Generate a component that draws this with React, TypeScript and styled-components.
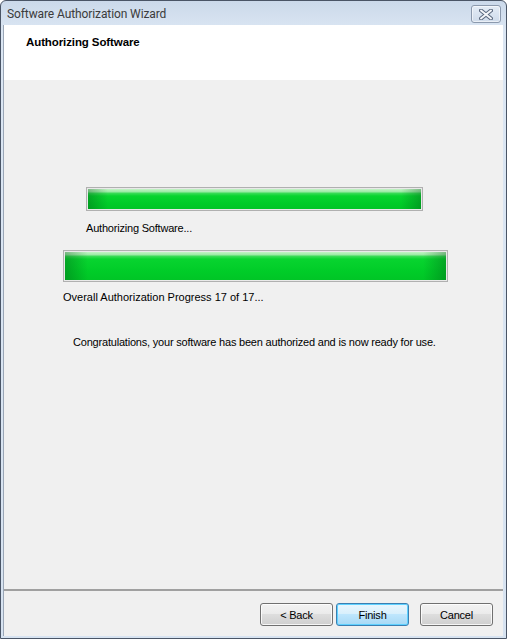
import styled, { createGlobalStyle } from 'styled-components'

const GlobalStyle = createGlobalStyle`
	html, body {
		margin: 0;
		padding: 0;
		background: #ffffff;
	}
	* {
		box-sizing: border-box;
	}
`

const StyledWindow = styled.div`
	width: 507px;
	height: 639px;
	display: flex;
	flex-direction: column;
	border: 1px solid #4a5566;
	border-radius: 6px 6px 0 0;
	background: linear-gradient(#cbd9ea, #dbe6f3 30px, #d7e3f1);
	font-family: 'Liberation Sans', Arial, sans-serif;
	font-size: 11px;
	letter-spacing: -0.2px;
	color: #000;
	overflow: hidden;
`
const StyledTitleBar = styled.div`
	height: 24px;
	display: flex;
	align-items: center;
	justify-content: space-between;
	padding: 0 5px 0 6px;
`
const StyledTitle = styled.span`
	font-family: Roboto, 'Liberation Sans', sans-serif;
	font-size: 12px;
	color: #3b3b3b;
	letter-spacing: -0.1px;
	margin-top: 1px;
`
const StyledCloseButton = styled.div`
	width: 30px;
	height: 18px;
	margin-top: 2px;
	border: 1px solid #8b99ad;
	border-radius: 3px;
	background: linear-gradient(#e4ecf6, #cfdbea);
	display: flex;
	align-items: center;
	justify-content: center;
	box-shadow: inset 0 0 0 1px rgba(255, 255, 255, 0.55);
`
const StyledClient = styled.div`
	flex: 1;
	margin: 0 3px 2px 2px;
	display: flex;
	flex-direction: column;
	background: #f0f0f0;
	border-left: 1px solid #9aa6b6;
`
const StyledHeader = styled.div`
	height: 55px;
	background: #ffffff;
	border-bottom: 2px solid;
	border-image: linear-gradient(#a0a0a0 50%, #ffffff 50%) 1;
	padding: 11px 0 0 22px;
	flex-shrink: 0;
`
const StyledHeaderTitle = styled.div`
	font-weight: bold;
	font-size: 11.5px;
	letter-spacing: -0.1px;
`
const StyledBody = styled.div`
	flex: 1;
	display: flex;
	flex-direction: column;
	align-items: flex-start;
	padding-top: 107px;
`
const StyledProgress = styled.div<{ $indent: number; $width: number; $height: number; $top?: number }>`
	margin-left: ${(p) => p.$indent}px;
	margin-top: ${(p) => p.$top ?? 0}px;
	width: ${(p) => p.$width}px;
	height: ${(p) => p.$height}px;
	border: 1px solid #b0b0b0;
	padding: 1px;
	background: #e9e9e9;
`
const StyledFill = styled.div`
	height: 100%;
	background:
		linear-gradient(90deg, rgba(0, 80, 20, 0.35), rgba(0, 0, 0, 0) 6%, rgba(0, 0, 0, 0) 94%, rgba(0, 80, 20, 0.35)),
		linear-gradient(#c4f3c6 0, #99e9a3 3px, #3fdc5b 4px, #08d42f 7px, #00cc28 70%, #00c526 100%);
`
const StyledLabel = styled.div<{ $indent: number; $top: number; $spacing?: number }>`
	margin-left: ${(p) => p.$indent}px;
	margin-top: ${(p) => p.$top}px;
	line-height: 13px;
	letter-spacing: ${(p) => p.$spacing ?? -0.2}px;
`
const StyledFooter = styled.div`
	height: 47px;
	flex-shrink: 0;
	border-top: 2px solid;
	border-image: linear-gradient(#a0a0a0 50%, #f5f5f5 50%) 1;
	display: flex;
	justify-content: flex-end;
	align-items: flex-start;
	padding: 12px 10px 0 0;
`
const StyledButton = styled.button<{ $default?: boolean; $gap?: number }>`
	width: 73px;
	height: 23px;
	margin-left: ${(p) => p.$gap ?? 0}px;
	font-family: 'Liberation Sans', Arial, sans-serif;
	font-size: 11px;
	letter-spacing: -0.2px;
	color: #000;
	border-radius: 3px;
	border: 1px solid ${(p) => (p.$default ? '#3c7fb1' : '#707070')};
	background: ${(p) =>
		p.$default
			? 'linear-gradient(#eaf6fd 0%, #d9f0fc 45%, #bee6fd 50%, #a7d9f5 100%)'
			: 'linear-gradient(#f2f2f2 0%, #ebebeb 45%, #dddddd 50%, #cfcfcf 100%)'};
	box-shadow: inset 0 0 0 1px ${(p) => (p.$default ? '#5fd1ff' : 'rgba(255, 255, 255, 0.8)')};
	padding: 0;
`

function CloseIcon() {
	return (
		<svg width="14" height="11" viewBox="0 0 14 11">
			<path d="M2 1.5 L12 9.5 M12 1.5 L2 9.5" stroke="#5d6b80" strokeWidth="4" strokeLinecap="round" />
			<path d="M2 1.5 L12 9.5 M12 1.5 L2 9.5" stroke="#f4f6f9" strokeWidth="2" strokeLinecap="round" />
		</svg>
	)
}

export default function App() {
	return (
		<>
			<GlobalStyle />
			<StyledWindow>
				<StyledTitleBar>
					<StyledTitle>Software Authorization Wizard</StyledTitle>
					<StyledCloseButton>
						<CloseIcon />
					</StyledCloseButton>
				</StyledTitleBar>

				<StyledClient>
					<StyledHeader>
						<StyledHeaderTitle>Authorizing Software</StyledHeaderTitle>
					</StyledHeader>

					<StyledBody>
						<StyledProgress $indent={82} $width={337} $height={24}>
							<StyledFill />
						</StyledProgress>
						<StyledLabel $indent={82} $top={11}>Authorizing Software...</StyledLabel>
						<StyledProgress $indent={59} $width={385} $height={32} $top={15}>
							<StyledFill />
						</StyledProgress>
						<StyledLabel $indent={59} $top={9} $spacing={0}>
							Overall Authorization Progress 17 of 17...
						</StyledLabel>
						<StyledLabel $indent={69} $top={32}>
							Congratulations, your software has been authorized and is now ready for use.
						</StyledLabel>
					</StyledBody>

					<StyledFooter>
						<StyledButton>&lt; Back</StyledButton>
						<StyledButton $default $gap={3}>Finish</StyledButton>
						<StyledButton $gap={11}>Cancel</StyledButton>
					</StyledFooter>
				</StyledClient>
			</StyledWindow>
		</>
	)
}
